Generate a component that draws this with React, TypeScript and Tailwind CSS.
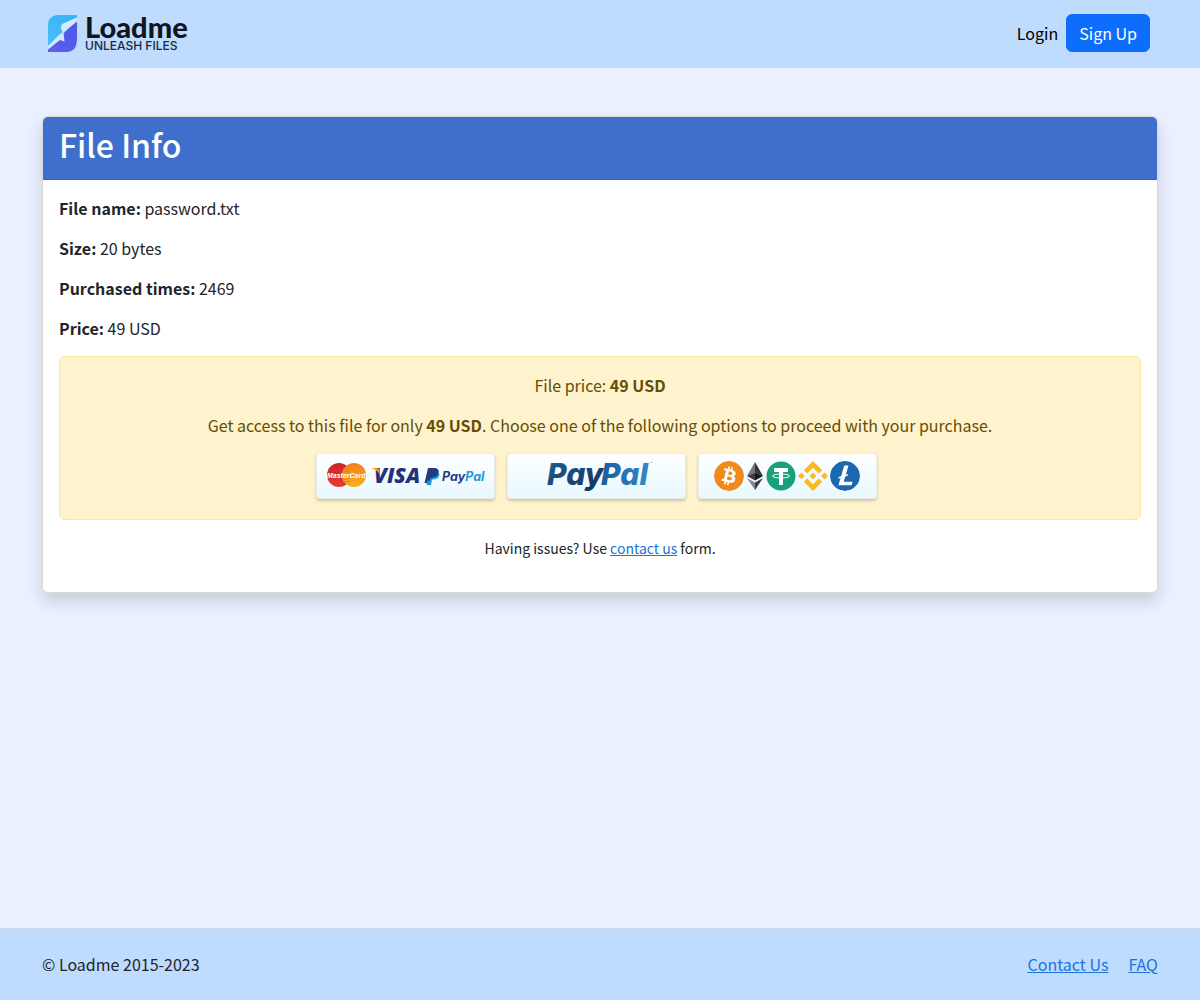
import type { ReactNode } from 'react';
import { SiBinance, SiBitcoin, SiLitecoin } from 'react-icons/si';

const details = [
  { label: 'File name', value: 'password.txt' },
  { label: 'Size', value: '20 bytes' },
  { label: 'Purchased times', value: '2469' },
  { label: 'Price', value: '49 USD' },
];

export default function App() {
  return (
    <div className="flex min-h-screen flex-col bg-[#eaf0ff] font-['Noto_Sans_CJK_SC','Noto_Sans_CJK_JP',sans-serif] text-base leading-6 text-[#212529]">
      <Header />
      <main className="mx-auto w-full max-w-[1140px] flex-1 px-3 py-12">
        <FileCard />
      </main>
      <Footer />
    </div>
  );
}

function Header() {
  return (
    <header className="bg-[#bfdbfe]">
      <div className="mx-auto flex max-w-[1140px] items-center justify-between px-4 pt-3.5 pb-4">
        <a href="#">
          <Logo />
        </a>
        <nav className="flex items-center gap-2 pr-1">
          <a href="#login" className="text-black">Login</a>
          <a href="#signup" className="rounded-md border border-[#0d6efd] bg-[#0d6efd] px-3 py-1.5 text-white">Sign Up</a>
        </nav>
      </div>
    </header>
  );
}

function Logo() {
  return (
    <span className="flex items-center gap-1.5">
      <svg width="33" height="38" viewBox="0 1 33 38">
        <defs>
          <linearGradient id="logo-light" x1="0" y1="0" x2="0" y2="1">
            <stop offset="0" stopColor="#38b6f5" />
            <stop offset="1" stopColor="#4fc0fb" />
          </linearGradient>
          <linearGradient id="logo-dark" x1="1" y1="0" x2="0" y2="1">
            <stop offset="0" stopColor="#4a55e6" />
            <stop offset="1" stopColor="#5f60f2" />
          </linearGradient>
        </defs>
        <path d="M13 2H31V7L18 20L2 36V13C2 6 5 2 13 2Z" fill="url(#logo-light)" />
        <path d="M31 7V25C31 34 28 39 20 39H2V34L18 20Z" fill="url(#logo-dark)" />
        <path d="M31 4.500L16 11L14.700 14.300L16.500 19.300L12 23L2 33V36.500L14 27L18.500 28.500L17.500 19.500L21 16.500L31 8.500Z" fill="#d3e9ff" />
      </svg>
      <span className="flex flex-col">
        <span className="font-[Lato,sans-serif] text-[29px] leading-[26px] font-black text-[#10151f]">Loadme</span>
        <span className="font-[Inter,sans-serif] text-[12px] leading-3 font-medium text-[#1c2a40]">UNLEASH FILES</span>
      </span>
    </span>
  );
}

function FileCard() {
  return (
    <section className="rounded-md border border-black/15 bg-white shadow-[0_8px_16px_rgba(0,0,0,0.15)]">
      <div className="rounded-t-[5px] border-b border-[#3864b8] bg-[#3e6fcc] px-4 pt-2 pb-4">
        <h1 className="text-[32px] leading-[38px] font-medium text-white">File Info</h1>
      </div>
      <div className="p-4">
        {details.map((item) => (
          <p key={item.label} className="mb-4">
            <strong>{item.label}:</strong> {item.value}
          </p>
        ))}
        <div className="rounded-md border border-[#f8e5a8] bg-[#fff3cd] px-4 pt-4 pb-5 text-center text-[#664d03]">
          <p className="mb-4">
            File price: <strong>49 USD</strong>
          </p>
          <p className="mb-4">
            Get access to this file for only <strong>49 USD</strong>. Choose one of the following options to proceed with your purchase.
          </p>
          <div className="flex flex-wrap justify-center gap-3 pr-2">
            <PayButton label="Pay by card"><CardLogos /></PayButton>
            <PayButton label="PayPal"><PayPalLogo /></PayButton>
            <PayButton label="Pay with crypto"><CryptoLogos /></PayButton>
          </div>
        </div>
        <p className="my-4 text-center text-sm leading-6">
          Having issues? Use <a href="#contact" className="text-[#1a73d9] underline">contact us</a> form.
        </p>
      </div>
    </section>
  );
}

function PayButton({ label, children }: { label: string; children: ReactNode }) {
  return (
    <button
      type="button"
      aria-label={label}
      className="flex h-[46px] w-[179px] cursor-pointer items-center justify-center rounded border border-[#ebedea] bg-linear-to-b from-white to-[#e8f8ff] shadow-[0_2px_3px_rgba(0,0,0,0.2)]"
    >
      {children}
    </button>
  );
}

function CardLogos() {
  return (
    <svg width="162" height="36" viewBox="-2 -3 162 36" fontStyle="italic">
      <defs>
        <linearGradient id="mc-red" x1="0" y1="0" x2="0" y2="1">
          <stop offset="0" stopColor="#c9252b" />
          <stop offset="1" stopColor="#e83b32" />
        </linearGradient>
        <linearGradient id="mc-gold" x1="0" y1="0" x2="0" y2="1">
          <stop offset="0" stopColor="#f0801d" />
          <stop offset="1" stopColor="#fbb01c" />
        </linearGradient>
      </defs>
      <circle cx="13" cy="14" r="12" fill="url(#mc-red)" />
      <circle cx="28" cy="14" r="12" fill="url(#mc-gold)" />
      <path d="M17 8H24M16 10.500H23M16 18H23M17 20.500H24" stroke="#f2762a" strokeWidth="1" />
      <text x="1" y="17" fontFamily="'Liberation Sans', sans-serif" fontSize="7" fontWeight="700" fill="#fff">MasterCard</text>
      <text x="48" y="22" fontFamily="'Open Sans', sans-serif" fontSize="21" fontWeight="800" fill="#25307c">VISA</text>
      <path d="M45 7H50.500C52 7 53 8 53.500 11L54 14C52 10 49 8 45 7Z" fill="#f4a51c" />
      <path d="M102 7H108C112 7 113.500 9.500 112.500 12.500C111.500 16.500 108 17 105 17L104 22H98.500Z" fill="#253b80" />
      <path d="M112.500 11C115 14 112 18.500 107.500 18.500H106L105 24H100.500L101.500 19.500H104L105 17C109 17 112 16 112.500 11Z" fill="#179bd7" />
      <text x="116" y="20" fontFamily="Inter, sans-serif" fontSize="12.500" fontWeight="700" fill="#253b80">
        Pay<tspan fill="#1d9bd8">Pal</tspan>
      </text>
    </svg>
  );
}

function PayPalLogo() {
  return (
    <svg width="120" height="40" viewBox="0 0 120 40" fontFamily="Inter, sans-serif" fontStyle="italic">
      <defs>
        <linearGradient id="pay" x1="0" y1="0" x2="1" y2="1">
          <stop offset="0" stopColor="#1d6297" />
          <stop offset="1" stopColor="#152f59" />
        </linearGradient>
        <linearGradient id="pal" x1="0" y1="0" x2="1" y2="0">
          <stop offset="0" stopColor="#1c5d9e" />
          <stop offset="1" stopColor="#3289c8" />
        </linearGradient>
      </defs>
      <text x="11" y="29" fontSize="30" fontWeight="800" fill="url(#pay)">Pay</text>
      <text x="65" y="29" fontSize="30" fontWeight="800" fill="url(#pal)">Pal</text>
      <text x="114" y="9" fontSize="4" fontStyle="normal" fill="#5a89ad">™</text>
    </svg>
  );
}

function CryptoLogos() {
  return (
    <div className="flex items-center gap-0.5">
      <SiBitcoin size={30} className="rounded-full bg-white text-[#f08a1c]" />
      <EthereumIcon />
      <TetherIcon />
      <SiBinance size={30} className="text-[#f8ba1c]" />
      <SiLitecoin size={30} className="rounded-full bg-white text-[#1b67b0]" />
    </div>
  );
}

function EthereumIcon() {
  return (
    <svg width="18" height="30" viewBox="0 0 18 30">
      <path d="M9 1L1 15L9 11.500Z" fill="#75777a" />
      <path d="M9 1L17 15L9 11.500Z" fill="#343638" />
      <path d="M1 15L9 11.500V19.500Z" fill="#3b3d40" />
      <path d="M17 15L9 11.500V19.500Z" fill="#17181a" />
      <path d="M1 17L9 21.500V29Z" fill="#85878a" />
      <path d="M17 17L9 21.500V29Z" fill="#3a3c3f" />
    </svg>
  );
}

function TetherIcon() {
  return (
    <svg width="30" height="30" viewBox="0 0 30 30">
      <circle cx="15" cy="15" r="14.500" fill="#17a07a" />
      <path d="M8 7H22V11H17V24H13V11H8Z" fill="#fff" />
      <ellipse cx="15" cy="15" rx="8.500" ry="2" fill="none" stroke="#fff" strokeWidth="1" />
    </svg>
  );
}

function Footer() {
  return (
    <footer className="border-t border-[#c8d8ec] bg-[#bfdbfe]">
      <div className="mx-auto flex max-w-[1140px] items-center justify-between px-3 pt-[23px] pb-6">
        <span>© Loadme 2015-2023</span>
        <div className="flex gap-5 text-[#1a73d9]">
          <a href="#contact" className="underline">Contact Us</a>
          <a href="#faq" className="underline">FAQ</a>
        </div>
      </div>
    </footer>
  );
}
